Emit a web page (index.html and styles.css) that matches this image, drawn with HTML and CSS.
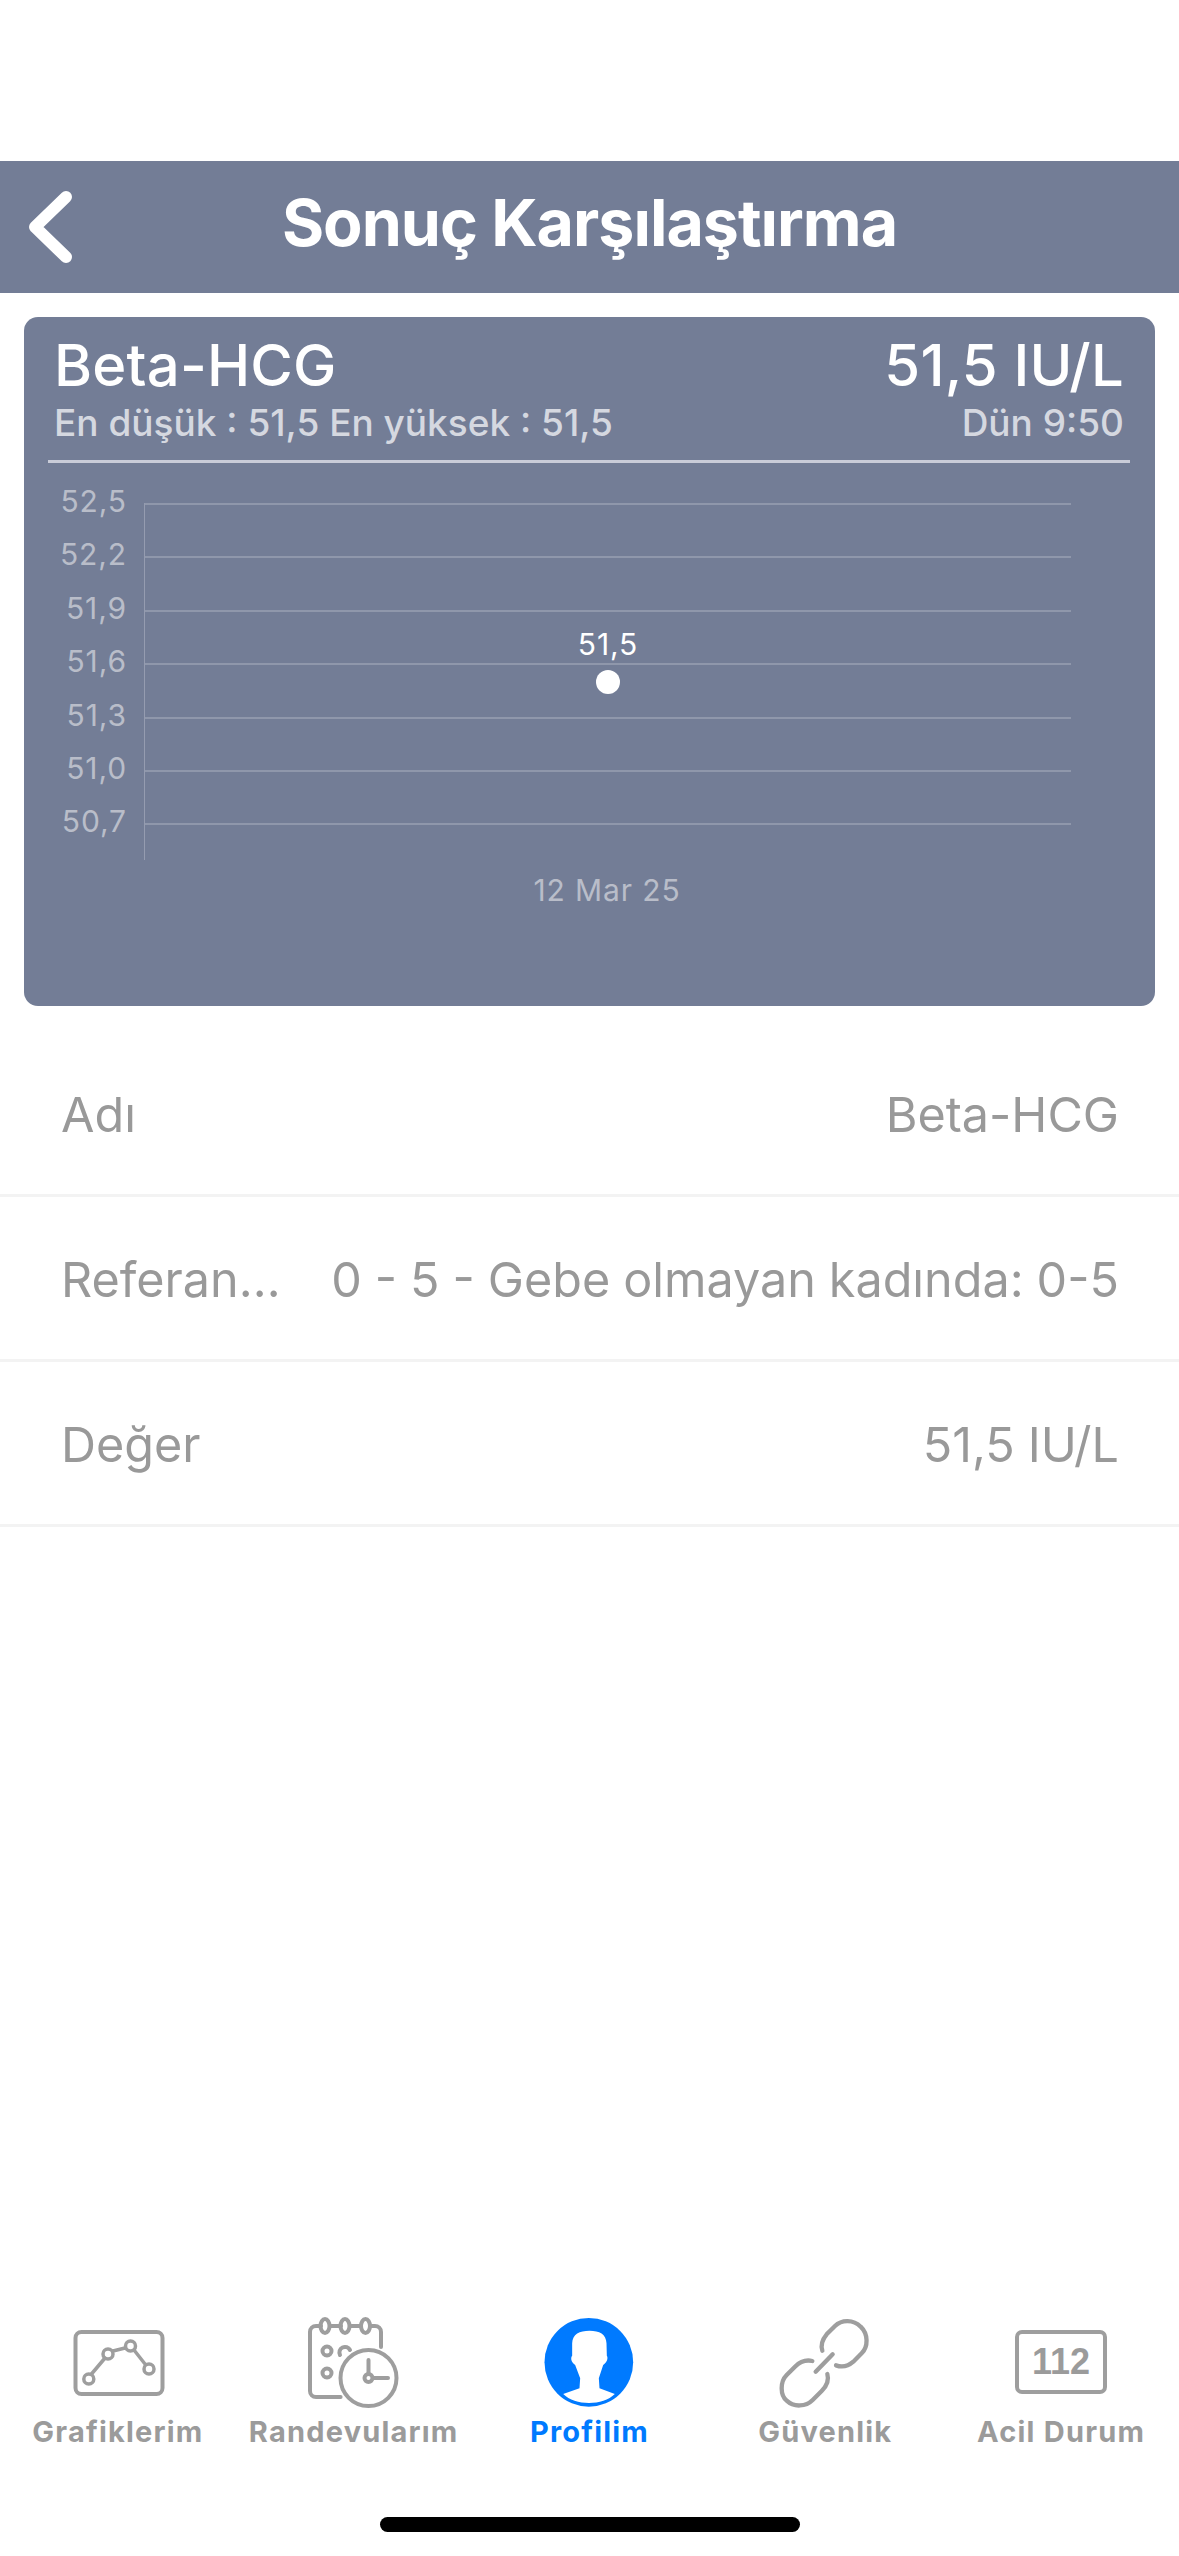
FILE: index.html
```html
<!DOCTYPE html>
<html lang="tr">
<head>
    <meta charset="UTF-8">
    <meta name="viewport" content="width=device-width, initial-scale=1.0">
    <title>Sonuç Karşılaştırma</title>
    <link rel="stylesheet" href="styles.css">
</head>
<body>

    <header class="topbar">
        <svg class="back-icon" viewBox="0 0 48 72"><path d="M37 6 L6 36 L37 66"/></svg>
        <h1>Sonuç Karşılaştırma</h1>
        <span></span>
    </header>

    <main class="content">
        <section class="card">
            <div class="card-head">
                <div class="head-row">
                    <span>Beta-HCG</span>
                    <span>51,5 IU/L</span>
                </div>
                <div class="head-row sub">
                    <span>En düşük : 51,5 En yüksek : 51,5</span>
                    <span>Dün 9:50</span>
                </div>
            </div>
            <div class="chart">
                <div class="ticks">
                    <span>52,5</span>
                    <span>52,2</span>
                    <span>51,9</span>
                    <span>51,6</span>
                    <span>51,3</span>
                    <span>51,0</span>
                    <span>50,7</span>
                </div>
                <div class="plot">
                    <i></i><i></i><i></i><i></i><i></i><i></i><i></i>
                    <span class="point-label">51,5</span>
                    <span class="point"></span>
                </div>
            </div>
            <div class="x-label">12 Mar 25</div>
        </section>

        <div class="rows">
            <div class="row"><span>Adı</span><span>Beta-HCG</span></div>
            <div class="row"><span>Referan…</span><span>0 - 5 - Gebe olmayan kadında: 0-5</span></div>
            <div class="row"><span>Değer</span><span>51,5 IU/L</span></div>
        </div>
    </main>

    <nav class="tabbar">
        <div class="tab">
            <svg viewBox="0 0 100 92">
                <rect x="7.5" y="15" width="87" height="62" rx="6"/>
                <path class="thin" d="M23.5 57 L37 41 M45 34 L57 31 M66 33 L77 47"/>
                <circle class="thin" cx="20.8" cy="62" r="5"/>
                <circle class="thin" cx="40" cy="37" r="5"/>
                <circle class="thin" cx="62.5" cy="29" r="5"/>
                <circle class="thin" cx="81" cy="52" r="5"/>
            </svg>
            <span>Grafiklerim</span>
        </div>
        <div class="tab">
            <svg viewBox="1 0 100 92">
                <path d="M37.6 80 H13 a6 6 0 0 1 -6 -6 V15 a6 6 0 0 1 6 -6 H18 M27 9 H38 M47 9 H57 M67 9 H72 a6 6 0 0 1 6 6 V30"/>
                <ellipse cx="22" cy="9" rx="4.5" ry="7"/>
                <ellipse cx="42" cy="9" rx="4.5" ry="7"/>
                <ellipse cx="62.5" cy="9" rx="4.5" ry="7"/>
                <circle cx="24" cy="34" r="4.5"/>
                <path d="M37 38 A5 5 0 1 1 47 33"/>
                <circle cx="24" cy="56" r="4.5"/>
                <circle cx="65.5" cy="61" r="28"/>
                <path d="M65.5 43 V56 M70 61 H85"/>
                <circle cx="65.5" cy="61" r="4"/>
            </svg>
            <span>Randevularım</span>
        </div>
        <div class="tab active">
            <svg viewBox="13.5 21 300 276">
                <circle class="solid" cx="163" cy="157" r="133"/>
                <path class="person" d="M165 62 C195 62 215 72 216 100 L217 137 C221 143 219 155 206 165 L193 205 L195 235 L241 252 C205 288 122 288 86 252 L135 235 L137 205 L122 165 C109 155 108 143 113 137 L113 100 C114 72 135 62 165 62 Z"/>
            </svg>
            <span>Profilim</span>
        </div>
        <div class="tab">
            <svg viewBox="15 21 300 276">
                <g class="thick">
                    <path d="M157 122 C150 100 160 85 170 73 L195 48 C215 28 250 28 272 50 C295 72 295 110 275 130 L250 155 C235 168 215 172 198 166"/>
                    <path d="M127 153 C105 148 90 155 75 170 L50 195 C30 215 30 255 50 272 C72 293 108 290 128 270 L155 243 C170 228 178 212 172 192"/>
                    <path d="M137 185 L188 133"/>
                </g>
            </svg>
            <span>Güvenlik</span>
        </div>
        <div class="tab">
            <div class="emergency">112</div>
            <span>Acil Durum</span>
        </div>
    </nav>

    <div class="home-indicator"></div>

</body>
</html>
```

FILE: styles.css
```css
body {
    margin: 0;
    width: 1179px;
    height: 2556px;
    background-color: #fff;
    display: flex;
    flex-direction: column;
    font-family: Inter, "Liberation Sans", sans-serif;
    overflow: hidden;
}

/* Ust bar */
.topbar {
    margin-top: 161px;
    height: 132px;
    background-color: #737d96;
    display: grid;
    grid-template-columns: 1fr auto 1fr;
    align-items: center;
    color: #fff;
}

.topbar h1 {
    margin: 0 0 8px;
    font-size: 64.5px;
    font-weight: 700;
    letter-spacing: -1px;
}

.back-icon {
    width: 48px;
    height: 72px;
    margin-left: 29px;
    fill: none;
    stroke: #fff;
    stroke-width: 12;
    stroke-linecap: round;
    stroke-linejoin: round;
}

.content {
    flex: 1;
}

/* Grafik karti */
.card {
    margin: 24px 24px 26px;
    height: 689px;
    box-sizing: border-box;
    background-color: #737d96;
    border-radius: 14px;
    color: #fff;
}

.card-head {
    margin: 0 25px 0 24px;
    padding: 18px 6px 15px 6px;
    border-bottom: 3px solid #c9ccd8;
}

.head-row {
    display: flex;
    justify-content: space-between;
    font-size: 58px;
    font-weight: 500;
    line-height: 60px;
    letter-spacing: 0.2px;
}

.head-row.sub {
    margin-top: 6px;
    font-size: 37px;
    line-height: 44px;
    letter-spacing: 0;
    color: #d5d8e0;
}

.chart {
    display: flex;
    margin-top: 40px;
}

.ticks {
    width: 103px;
    margin-top: -28px;
    display: flex;
    flex-direction: column;
    align-items: flex-end;
    font-size: 30px;
    letter-spacing: 0.9px;
    color: #b9bdc9;
}

.ticks span {
    height: 53.4px;
    line-height: 53.4px;
}

.plot {
    position: relative;
    margin-left: 17px;
    width: 926px;
    height: 357px;
    border-left: 1px solid #959cb0;
}

.plot i {
    display: block;
    height: 53.4px;
    box-sizing: border-box;
    border-top: 2px solid #8f97ab;
}

.point {
    position: absolute;
    left: 451px;
    top: 167px;
    width: 24px;
    height: 24px;
    border-radius: 50%;
    background-color: #fff;
}

.point-label {
    position: absolute;
    left: 0;
    width: 926px;
    top: 123px;
    text-align: center;
    font-size: 30px;
    letter-spacing: 0.9px;
    line-height: 36px;
    color: #fff;
}

.x-label {
    margin: 11px 0 0 120px;
    width: 926px;
    text-align: center;
    font-size: 30px;
    letter-spacing: 0.9px;
    line-height: 38px;
    color: #b9bdc9;
}

/* Bilgi satirlari */
.row {
    height: 160px;
    padding: 2px 60px 0 61px;
    display: flex;
    justify-content: space-between;
    align-items: center;
    border-bottom: 3px solid #f3f3f3;
    font-size: 48.5px;
    word-spacing: -0.7px;
    color: #999;
}

/* Alt menu */
.tabbar {
    display: grid;
    grid-template-columns: repeat(5, 1fr);
}

.tab {
    display: flex;
    flex-direction: column;
    align-items: center;
    font-size: 29px;
    font-weight: 700;
    line-height: 36px;
    letter-spacing: 1.2px;
    color: #9b9b9b;
}

.tab svg {
    width: 100px;
    height: 92px;
    fill: none;
    stroke: #9e9e9e;
    stroke-width: 4;
    stroke-linecap: round;
}

.tab svg .thin {
    stroke-width: 3.5;
}

.tab span {
    margin-top: 5px;
    white-space: nowrap;
}

.tab.active {
    color: #007aff;
}

.tab svg .solid {
    fill: #007aff;
    stroke: none;
}

.tab svg .person {
    fill: #fff;
    stroke: none;
}

.tab svg .thick {
    stroke-width: 13;
}

.emergency {
    margin: 13px 0 15px;
    width: 92px;
    height: 64px;
    box-sizing: border-box;
    border: 4px solid #9e9e9e;
    border-radius: 7px;
    display: flex;
    justify-content: center;
    align-items: center;
    font-family: "Liberation Sans", sans-serif;
    font-size: 36px;
    font-weight: 700;
    letter-spacing: 0;
    color: #9b9b9b;
}

.home-indicator {
    width: 420px;
    height: 15px;
    margin: 67px auto 24px;
    border-radius: 8px;
    background-color: #000;
}
```
